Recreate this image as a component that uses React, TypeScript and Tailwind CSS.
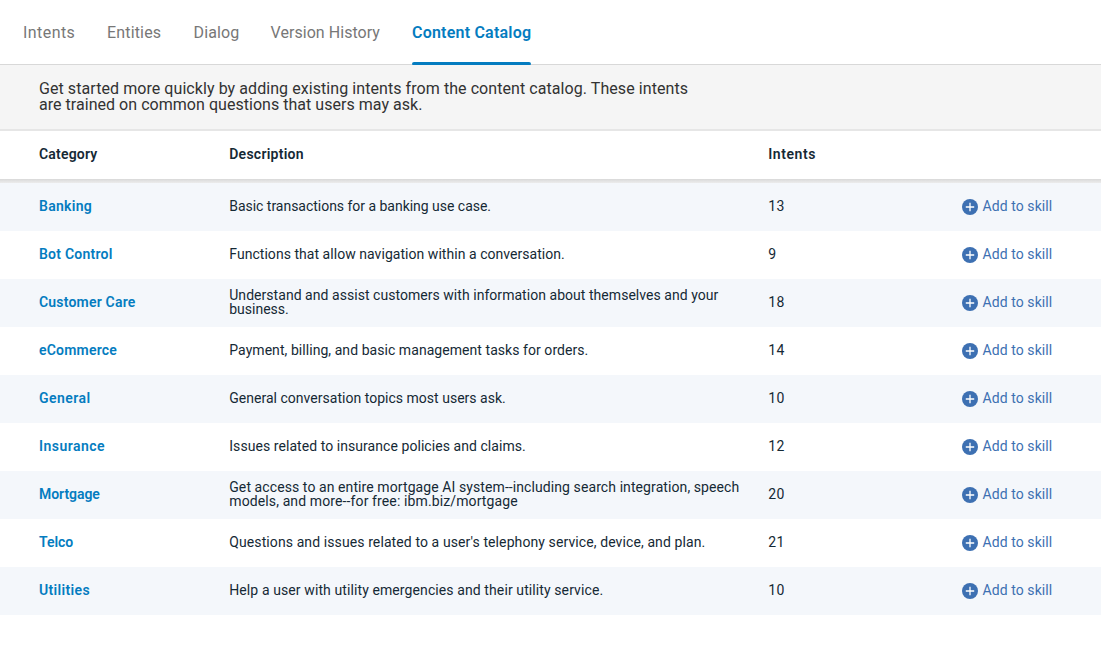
const tabs = [
  { label: "Intents", tracking: "tracking-[0.43px]", width: "w-[52px]" },
  { label: "Entities", tracking: "tracking-[0.16px]", width: "w-[54.5px]" },
  { label: "Dialog", tracking: "tracking-[0.151px]", width: "w-[45px]" },
  { label: "Version History", tracking: "tracking-[0.051px]", width: "w-[109.5px]" },
];

const columns = "grid grid-cols-[190.25px_539px_193.75px_1fr] items-center pl-[39px] pb-0.5 h-12";

type Line = { text: string; tracking: string };
type Row = { name: string; tracking: string; lines: Line[]; intents: number };

const rows: Row[] = [
  { name: "Banking", tracking: "tracking-[0.279px]", intents: 13, lines: [{ text: "Basic transactions for a banking use case.", tracking: "tracking-[-0.025px]" }] },
  { name: "Bot Control", tracking: "tracking-[0.227px]", intents: 9, lines: [{ text: "Functions that allow navigation within a conversation.", tracking: "tracking-[0.043px]" }] },
  {
    name: "Customer Care", tracking: "tracking-[0.196px]", intents: 18,
    lines: [
      { text: "Understand and assist customers with information about themselves and your", tracking: "tracking-[0.042px]" },
      { text: "business.", tracking: "tracking-[0px]" },
    ],
  },
  { name: "eCommerce", tracking: "tracking-[0.198px]", intents: 14, lines: [{ text: "Payment, billing, and basic management tasks for orders.", tracking: "tracking-[0.056px]" }] },
  { name: "General", tracking: "tracking-[0.444px]", intents: 10, lines: [{ text: "General conversation topics most users ask.", tracking: "tracking-[0.02px]" }] },
  { name: "Insurance", tracking: "tracking-[0.462px]", intents: 12, lines: [{ text: "Issues related to insurance policies and claims.", tracking: "tracking-[0.06px]" }] },
  {
    name: "Mortgage", tracking: "tracking-[-0.05px]", intents: 20,
    lines: [
      { text: "Get access to an entire mortgage AI system--including search integration, speech", tracking: "tracking-[0.088px]" },
      { text: "models, and more--for free: ibm.biz/mortgage", tracking: "tracking-[0.118px]" },
    ],
  },
  { name: "Telco", tracking: "tracking-[-0.05px]", intents: 21, lines: [{ text: "Questions and issues related to a user's telephony service, device, and plan.", tracking: "tracking-[0.1px]" }] },
  { name: "Utilities", tracking: "tracking-[0.345px]", intents: 10, lines: [{ text: "Help a user with utility emergencies and their utility service.", tracking: "tracking-[0.1px]" }] },
];

function AddButton() {
  return (
    <button className="flex items-center gap-[4.5px] whitespace-nowrap text-[#3d70b2] tracking-[0.08px]">
      <svg width="16" height="16" viewBox="0 0 16 16" className="mt-0.5">
        <circle cx="8" cy="8" r="8" fill="#3d70b2" />
        <path d="M8 3.8v8.4M3.8 8h8.4" stroke="#fff" strokeWidth="1.3" />
      </svg>
      <span>Add to skill</span>
    </button>
  );
}

export default function App() {
  return (
    <div className="min-h-[653px] bg-white font-['Roboto',sans-serif] text-sm leading-[14px] text-[#152935]">
      <nav className="flex h-[65px] gap-8 border-b border-[#d8d8d8] pl-[23px] text-base text-[#777777]">
        {tabs.map((t) => (
          <a key={t.label} className={`flex h-[65px] items-center whitespace-nowrap ${t.tracking} ${t.width}`}>
            {t.label}
          </a>
        ))}
        <a className="flex h-[65px] w-[119px] flex-col justify-end whitespace-nowrap font-semibold tracking-[0.21px] text-[#047cc0]">
          <span className="flex h-[62px] items-center pt-[3px]">Content Catalog</span>
          <span className="h-[3px] rounded-t-[2px] rounded-b-[1px] bg-[#047cc0]" />
        </a>
      </nav>
      <section className="h-[66px] border-b-2 border-[#e6e6e6] bg-[#f5f5f5] pt-4 pl-[39px] text-base leading-4 whitespace-nowrap text-[#323232]">
        <p className="tracking-[0.069px]">Get started more quickly by adding existing intents from the content catalog. These intents</p>
        <p className="tracking-[0.036px]">are trained on common questions that users may ask.</p>
      </section>
      <div className={`${columns} font-semibold`}>
        <span className="tracking-[0.197px]">Category</span>
        <span className="tracking-[0.25px]">Description</span>
        <span className="tracking-[0.56px]">Intents</span>
      </div>
      <div className="h-1 bg-linear-to-b from-[#d9d9d9] to-[#ececec]" />
      <main>
        {rows.map((r) => (
          <div key={r.name} className={`${columns} odd:bg-[#f4f7fb] even:bg-white`}>
            <a className={`font-semibold text-[#047cc0] ${r.tracking}`}>{r.name}</a>
            <div className="whitespace-nowrap">
              {r.lines.map((l) => (
                <p key={l.text} className={l.tracking}>{l.text}</p>
              ))}
            </div>
            <span className="tracking-[0.5px]">{r.intents}</span>
            <AddButton />
          </div>
        ))}
      </main>
    </div>
  );
}
